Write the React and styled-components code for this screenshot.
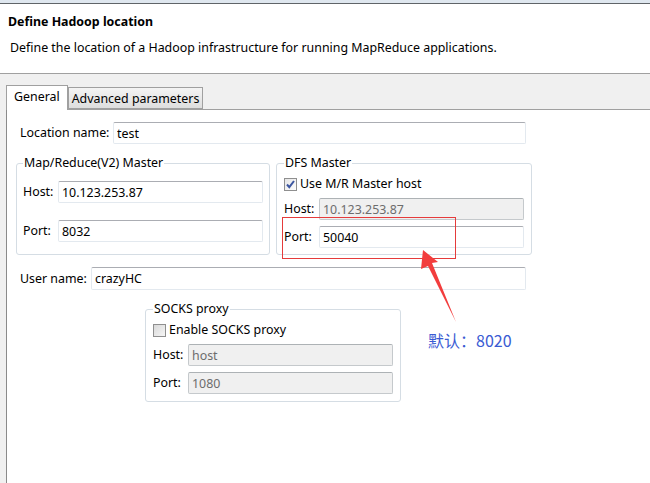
import React from 'react';
import styled, { createGlobalStyle } from 'styled-components';

const GlobalStyle = createGlobalStyle`
  html, body {
    margin: 0;
    padding: 0;
    background: #fff;
  }
  body {
    font-family: "Noto Sans", "Noto Sans CJK SC", sans-serif;
    font-size: 12.4px;
    color: #000;
  }
`;

const CheckMark = () => (
  <svg width="11" height="11" viewBox="0 0 11 11">
    <path d="M2 5.5 L4.3 8.2 L9 2" fill="none" stroke="#3c56a0" strokeWidth="2" />
  </svg>
);

const Field = ({ label, value, disabled, labelWidth }) => (
  <FieldRow>
    <Label width={labelWidth}>{label}</Label>
    <TextBox defaultValue={value} disabled={disabled} readOnly />
  </FieldRow>
);

const App = () => {
  return (
    <Window>
      <GlobalStyle />
      <TopEdge />
      <Header>
        <Title>Define Hadoop location</Title>
        <Description>Define the location of a Hadoop infrastructure for running MapReduce applications.</Description>
      </Header>

      <TabArea>
        <TabBar>
          <Tab active>General</Tab>
          <Tab>Advanced parameters</Tab>
        </TabBar>

        <Panel>
          <Column>
            <Row>
              <Label width={93}>Location name:</Label>
              <TextBox defaultValue="test" readOnly />
            </Row>

            <GroupRow>
              <Group>
                <Legend>Map/Reduce(V2) Master</Legend>
                <GroupBody top={10} gap={17} bottom={12}>
                  <Field label="Host:" value="10.123.253.87" labelWidth={35} />
                  <Field label="Port:" value="8032" labelWidth={35} />
                </GroupBody>
              </Group>

              <Group pad={7}>
                <Legend>DFS Master</Legend>
                <GroupBody top={5} gap={6} bottom={6}>
                  <CheckRow>
                    <CheckBox checked><CheckMark /></CheckBox>
                    Use M/R Master host
                  </CheckRow>
                  <Field label="Host:" value="10.123.253.87" disabled labelWidth={35} />
                  <Field label="Port:" value="50040" labelWidth={35} />
                </GroupBody>
              </Group>
            </GroupRow>

            <Row spaced>
              <Label width={71}>User name:</Label>
              <TextBox defaultValue="crazyHC" readOnly tall />
            </Row>

            <Group pad={7} narrow>
              <Legend>SOCKS proxy</Legend>
              <GroupBody top={5} gap={6} bottom={7}>
                <CheckRow>
                  <CheckBox />
                  Enable SOCKS proxy
                </CheckRow>
                <Field label="Host:" value="host" disabled labelWidth={35} />
                <Field label="Port:" value="1080" disabled labelWidth={35} />
              </GroupBody>
            </Group>
          </Column>
        </Panel>
      </TabArea>

      {/* annotation drawn over the dialog */}
      <Highlight />
      <Arrow width="650" height="483" viewBox="0 0 650 483">
        <polygon points="423,250 438,262 432,263 456,322 428,266 421,269" fill="#f23d3d" />
      </Arrow>
      <Note>默认：8020</Note>
    </Window>
  );
};

const Window = styled.div`
  position: relative;
  width: 650px;
  height: 483px;
  overflow: hidden;
  display: flex;
  flex-direction: column;
  background: #fff;
`;

const TopEdge = styled.div`
  height: 3px;
  background: #dfe7ef;
  border-bottom: 1px solid #5f6468;
`;

const Header = styled.header`
  height: 70px;
  box-sizing: border-box;
  padding: 10px 0 0 8px;
  border-bottom: 1px solid #a0a0a0;
`;

const Title = styled.div`
  font-weight: bold;
  line-height: 16px;
`;

const Description = styled.div`
  margin: 10px 0 0 2px;
  line-height: 16px;
`;

const TabArea = styled.div`
  flex: 1;
  display: flex;
  flex-direction: column;
  background: #f0f0f0;
`;

const TabBar = styled.div`
  height: 35px;
  display: flex;
  align-items: flex-end;
  padding-left: 6px;
`;

const Tab = styled.div`
  position: relative;
  z-index: 1;
  box-sizing: border-box;
  height: ${(p) => (p.active ? '25px' : '22px')};
  margin-bottom: ${(p) => (p.active ? '-1px' : '0')};
  padding: ${(p) => (p.active ? '3px 7px 0' : '3px 3px 0')};
  border: 1px solid #a0a0a0;
  border-bottom: ${(p) => (p.active ? 'none' : '1px solid #a0a0a0')};
  background: ${(p) => (p.active ? '#fff' : 'linear-gradient(#f4f4f4, #dedede)')};
  line-height: 16px;
  white-space: nowrap;
`;

const Panel = styled.div`
  flex: 1;
  margin-left: 6px;
  border-top: 1px solid #a0a0a0;
  border-left: 1px solid #8a8a8a;
  background: #fff;
  padding: 12px 0 0 9px;
`;

const Column = styled.div`
  width: 516px;
  display: flex;
  flex-direction: column;
`;

const Row = styled.div`
  display: flex;
  align-items: center;
  margin: ${(p) => (p.spaced ? '12px 6px 0 4px' : '0 6px 0 4px')};
`;

const Label = styled.span`
  flex: none;
  width: ${(p) => p.width}px;
  white-space: nowrap;
  line-height: 16px;
`;

const TextBox = styled.input`
  flex: 1;
  min-width: 0;
  height: ${(p) => (p.tall ? '23px' : '22px')};
  box-sizing: border-box;
  margin: 0;
  padding: 0 3px;
  border: 1px solid #e3e9ef;
  border-top-color: #abadb3;
  border-radius: 2px;
  background: #fff;
  font: inherit;
  color: #000;
  outline: none;

  &:disabled {
    background: #f0f0f0;
    border-color: #c5c9cc;
    border-top-color: #adb2b5;
    color: #6d6d6d;
    -webkit-text-fill-color: #6d6d6d;
    opacity: 1;
  }
`;

const GroupRow = styled.div`
  display: flex;
  gap: 6px;
  margin-top: 11px;
`;

const Group = styled.fieldset`
  flex: ${(p) => (p.narrow ? 'none' : '1')};
  width: ${(p) => (p.narrow ? '256px' : 'auto')};
  align-self: ${(p) => (p.narrow ? 'center' : 'stretch')};
  margin: ${(p) => (p.narrow ? '11px 0 0 -2px' : '0')};
  min-width: 0;
  box-sizing: border-box;
  padding: 0 ${(p) => p.pad || 6}px;
  border: 1px solid #d5dde4;
  border-radius: 3px;
`;

const Legend = styled.legend`
  padding: 0 1px;
  line-height: 16px;
`;

const GroupBody = styled.div`
  display: flex;
  flex-direction: column;
  gap: ${(p) => p.gap}px;
  padding: ${(p) => p.top}px 0 ${(p) => p.bottom}px;
`;

const FieldRow = styled.div`
  display: flex;
  align-items: center;
`;

const CheckRow = styled.div`
  display: flex;
  align-items: center;
  gap: 3px;
  line-height: 16px;
`;

const CheckBox = styled.span`
  width: 13px;
  height: 13px;
  box-sizing: border-box;
  border: 1px solid #8f8f8f;
  background: ${(p) => (p.checked ? 'linear-gradient(135deg, #e6e6e6, #fdfdfd)' : 'linear-gradient(135deg, #d9d9d9, #f6f6f6)')};
  display: flex;
  align-items: center;
  justify-content: center;
`;

const Highlight = styled.div`
  position: absolute;
  left: 282px;
  top: 217px;
  width: 174px;
  height: 42px;
  box-sizing: border-box;
  border: 1px solid #e53b3b;
  pointer-events: none;
`;

const Arrow = styled.svg`
  position: absolute;
  left: 0;
  top: 0;
  pointer-events: none;
`;

const Note = styled.div`
  position: absolute;
  left: 428px;
  top: 329px;
  font-family: "Noto Sans CJK SC", sans-serif;
  font-size: 16px;
  line-height: 22px;
  color: #3a5bd3;
`;

export default App;
